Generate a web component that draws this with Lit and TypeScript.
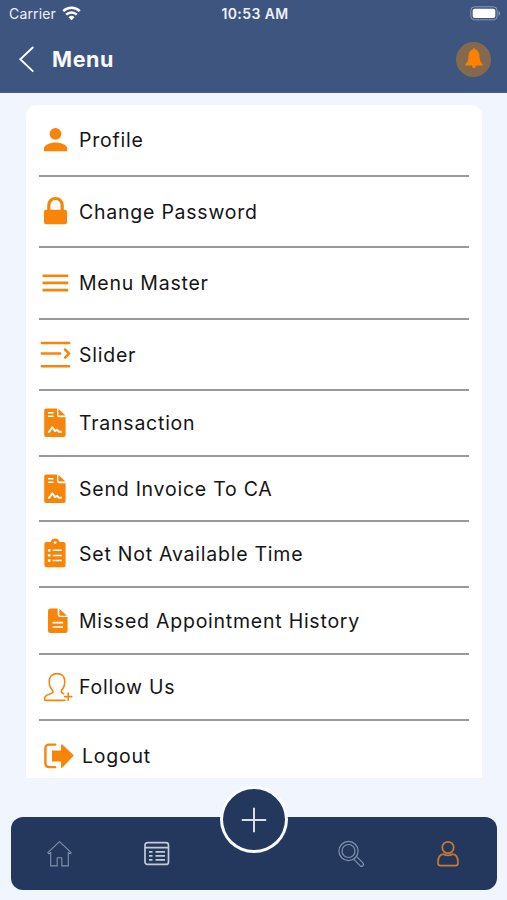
import { LitElement, html, svg, css } from "lit";
import { customElement } from "lit/decorators.js";

// Menu icons share a 40x32 canvas; the row centres it vertically.
const icons: Record<string, unknown> = {
  profile: svg`<circle cx="17.5" cy="9.8" r="5.9"/><path d="M6 27.2v-2.9c0-3.9 7.7-5.9 11.6-5.9s11.6 2 11.6 5.9v2.9z"/>`,
  lock: svg`<path fill-rule="evenodd" d="M8 13.7h1.2v-4.5a8.2 8.2 0 0 1 16.6 0v4.5h1.2a2 2 0 0 1 2 2v10.5a2 2 0 0 1-2 2h-19a2 2 0 0 1-2-2v-10.5a2 2 0 0 1 2-2zm4.4 0h10.2v-4.5a5.1 5.1 0 0 0-10.2 0z"/>`,
  bars: svg`<path class="line" stroke-width="2.6" d="M4.5 8.7h25.8M4.5 15.9h25.8M4.5 23.1h25.8"/>`,
  slider: svg`<path class="line" stroke-width="2.5" stroke-linecap="round" d="M3.8 4h27.4M3.8 14.6h18.4M3.8 27.2h27.4M27 10.5l4 4-4 4.2"/>`,
  contract: svg`<path d="M8 1.5h11v6.8a2 2 0 0 0 2 2h6.6v18a1.8 1.8 0 0 1-1.8 1.8h-17.8a1.8 1.8 0 0 1-1.8-1.8v-25a1.8 1.8 0 0 1 1.8-1.8z"/><path d="M20.4 1.7l7 6.8h-6a1 1 0 0 1-1-1z"/><path class="cut" stroke-width="1.5" d="M10 5.7h5.5M10 9.3h5.5"/><path class="cut" stroke-width="1.9" stroke-linejoin="round" d="M10 24.7h1.3l3-4.4 2.7 3.8 2-1.4 1.6 2h3.2"/>`,
  clipboard: svg`<path d="M8.2 4h4.600a4.400 4.400 0 0 1 8.600 0h4.200a2 2 0 0 1 2 2v21.300a2 2 0 0 1-2 2h-17.200a2 2 0 0 1-2-2v-21.300a2 2 0 0 1 2-2z"/><circle cx="17.1" cy="4.6" r="1.4" fill="#fff"/><path class="cut" stroke-width="1.5" d="M14.8 12.3h9M14.8 17.4h9M14.8 22.5h9"/><path class="cut" stroke-width="2.4" d="M9.9 12.3h2.6M9.9 17.4h2.6M9.9 22.5h2.6"/>`,
  file: svg`<path d="M12.4 3.5h7.3v6.3a2.3 2.3 0 0 0 2.3 2.3h7.6v13.6a2.4 2.4 0 0 1-2.4 2.4h-14.8a2.4 2.4 0 0 1-2.4-2.4v-19.8a2.4 2.4 0 0 1 2.4-2.4z"/><path d="M21.3 3.8l7.6 6.9h-6.4a1.2 1.2 0 0 1-1.2-1.2z"/><path class="cut" stroke-width="1.7" stroke-linecap="round" d="M15.2 17.7h9.2M15.2 22h9.2"/>`,
  follow: svg`<path class="line" stroke-width="1.6" stroke-linejoin="round" stroke-linecap="round" d="M27 29.400h-20.200c-1.200-4.200 1.600-5.300 4.500-6.200 2.600-.8 4.900-1.600 3-4.100-2.500-2.600-3.100-5.700-3.100-8.800 0-5 3.500-7.700 7.800-7.700s7.800 2.700 7.800 7.700c0 3.100-.6 6.200-3.100 8.800-1.200 2 .2 2.800 2 3.600M30.200 22v7.200M26.600 25.600h7.200"/>`,
  logout: svg`<path class="line" stroke-width="2.4" stroke-linecap="round" d="M17.2 4.6h-6.3a3.5 3.5 0 0 0-3.5 3.5v15.5a3.5 3.5 0 0 0 3.5 3.5h6.3"/><path d="M14 10.5h9v-5.4a.8.8 0 0 1 1.4-.5l11.4 11-11.4 12a.8.8 0 0 1-1.4-.5v-5.7h-9z"/>`,
};

const rows: [string, string, string][] = [
  ["profile", "Profile", "r72"],
  ["lock", "Change Password", "r71"],
  ["bars", "Menu Master", "r72"],
  ["slider", "Slider", "r71"],
  ["contract", "Transaction", "r66"],
  ["contract", "Send Invoice To CA", "r65"],
  ["clipboard", "Set Not Available Time", "r66"],
  ["file", "Missed Appointment History", "r67"],
  ["follow", "Follow Us", "r66"],
  ["logout", "Logout", "last"],
];

@customElement("app-root")
export class AppRoot extends LitElement {
  static styles = css`
    :host { display: flex; flex-direction: column; height: 900px; background: #f1f5fd; font-family: Inter, "Liberation Sans", sans-serif; overflow: hidden; }
    * { box-sizing: border-box; }
    svg { display: block; flex: none; }
    .header { height: 93px; flex: none; background: #3e557f; border-bottom: 1px solid #4a608a; color: #fff; }
    .status { height: 27px; display: grid; grid-template-columns: 1fr auto 1fr; align-items: center; padding: 0 6px 0 9px; font-size: 14px; color: #edf1f8; }
    .carrier { display: flex; align-items: center; gap: 6px; letter-spacing: .15px; }
    .time { font-weight: 600; font-size: 14px; letter-spacing: .4px; }
    .battery { justify-self: end; }
    .bar { height: 64px; display: flex; align-items: center; padding: 0 16px 0 18px; }
    .title { margin: 0 auto 0 16px; font-size: 21.5px; font-weight: 700; letter-spacing: .6px; color: #f7f9fc; }
    .bell { width: 35px; height: 35px; border-radius: 50%; background: #85694f; display: grid; place-items: center; }
    .card { width: 456px; height: 673px; flex: none; margin: 12px 0 0 26px; padding: 0 13px; background: #fff; border-radius: 11px 11px 0 0; overflow: hidden; }
    .row { display: flex; align-items: center; border-bottom: 2px solid #999; color: #151515; font-size: 19.5px; letter-spacing: .76px; white-space: nowrap; }
    .row svg { margin-right: 1px; margin-left: -1px; fill: #f6850a; }
    .r72 { height: 72px; } .r71 { height: 71px; } .r67 { height: 67px; } .r66 { height: 66px; } .r65 { height: 65px; }
    .last { height: 70px; border: 0; }
    .last svg { margin-right: 4px; }
    .line { fill: none; stroke: #f6850a; }
    .cut { fill: none; stroke: #fff; }
    .tabs { position: relative; height: 73px; flex: none; margin: 39px 10px 0 11px; background: #24385e; border-radius: 12px; display: grid; grid-template-columns: repeat(5, 1fr); align-items: center; justify-items: center; }
    .tabs svg { fill: none; }
    .add { position: absolute; top: -31px; left: 209px; width: 68px; height: 67px; border-radius: 50%; border: 3px solid #fafcff; background: #24385e; display: grid; place-items: center; }
  `;

  render() {
    return html`
      <div class="header">
        <div class="status">
          <div class="carrier">Carrier
            <svg width="19" height="15" viewBox="0 0 19 15" fill="none" stroke="#fff" stroke-width="2.5"><path d="M1.2 5.2a11.8 11.8 0 0 1 16.6 0M4.2 8.6a7.5 7.5 0 0 1 10.6 0"/><path fill="#fff" stroke="none" d="M9.5 14.2l-3-3a4.3 4.3 0 0 1 6 0z"/></svg>
          </div>
          <div class="time">10:53 AM</div>
          <svg class="battery" width="31" height="15" viewBox="0 0 31 15"><rect x=".8" y=".8" width="26.4" height="13" rx="3.8" fill="none" stroke="#8b9ab6"/><rect x="2.7" y="2.7" width="22.6" height="9.2" rx="2" fill="#fff"/><path d="M28.6 5v4.8c2-.8 2-4 0-4.8z" fill="#8b9ab6"/></svg>
        </div>
        <div class="bar">
          <svg width="18" height="28" viewBox="0 0 18 28" fill="none" stroke="#fff" stroke-width="1.9"><path d="M15.3 2L2.3 14.3l13 12.3"/></svg>
          <div class="title">Menu</div>
          <div class="bell"><svg width="20" height="22" viewBox="0 0 20 22" fill="#fb8200"><path d="M10 .2c.8 0 1 .5 1.200 1.300 2.800.8 4 3 4.200 6 .2 3.800.6 6.300 3.200 8.800v1.200H1.400v-1.200C4 13.800 4.400 11.300 4.600 7.500c.2-3 1.400-5.200 4.200-6C9 .7 9.200.2 10 .2zM8 17.400h4a2 2.600 0 0 1-4 0z"/></svg></div>
        </div>
      </div>
      <div class="card">
        ${rows.map(([icon, label, size]) => html`<div class="row ${size}"><svg width="40" height="32" viewBox="0 0 40 32">${icons[icon]}</svg><span>${label}</span></div>`)}
      </div>
      <div class="tabs">
        <svg width="28" height="28" viewBox="0 0 28 28" stroke="#8490aa" stroke-width="1.1" stroke-linejoin="round"><path d="M13.500 1.600L1.800 12.600l1.200 1.300 1.700-1.500v13.500h6.500v-8.200h4.600v8.200h6.500V12.400l1.700 1.500 1.200-1.300z"/></svg>
        <svg width="28" height="28" viewBox="0 0 28 28" stroke="#c3cbd8" stroke-width="1.700"><rect x="2" y="2.700" width="23.500" height="21.700" rx="2.500"/><path d="M2 7.600h23.500M6 11.800h3.500M6 15.800h3.500M6 19.800h3.500M12.500 11.800h9.500M12.500 15.800h9.500M12.500 19.800h9.500"/></svg>
        <span></span>
        <svg width="28" height="28" viewBox="0 0 28 28" stroke="#8290ad" stroke-width="1.200"><circle cx="11.500" cy="11" r="9.600"/><circle cx="11.500" cy="11" r="6.500"/><path stroke-linejoin="round" d="M16.700 19.100l6.300 6.500a1.900 1.900 0 0 0 2.900-2.700l-6.500-6.500"/></svg>
        <svg width="28" height="28" viewBox="0 0 28 28" stroke="#c87a2d" stroke-width="1.700"><circle cx="14" cy="7.500" r="5.700"/><path d="M9.500 14.200c-4 .2-5.500 4.500-5.500 8.500 0 2 .8 3 2.500 3h15c1.700 0 2.500-1 2.500-3 0-4-1.500-8.300-5.500-8.500-3 1.700-6 1.700-9 0z"/></svg>
        <div class="add"><svg width="26" height="26" viewBox="0 0 26 26" stroke="#d9dee3" stroke-width="2"><path d="M13 .8v24.400M.8 13h24.400"/></svg></div>
      </div>
    `;
  }
}
